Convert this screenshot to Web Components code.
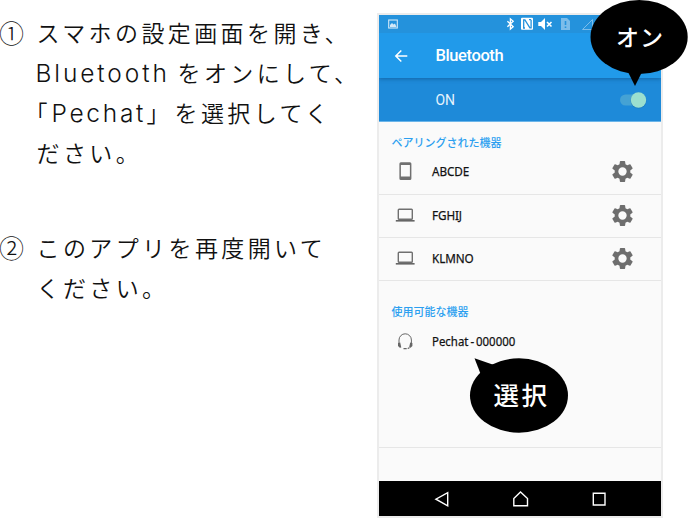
<!DOCTYPE html>
<html lang="ja"><head><meta charset="utf-8"><title>Bluetooth</title>
<style>body{margin:0;background:#fff;width:688px;height:518px;overflow:hidden}</style></head><body>
<pairing-guide></pairing-guide>
<script>
const define=(name,html)=>customElements.define(name,class extends HTMLElement{
 constructor(){super();const t=document.createElement('template');t.innerHTML=html;this.attachShadow({mode:'open'}).append(t.content.cloneNode(true));}
});
define('guide-step',`<style>
:host{display:grid;grid-template-columns:36.5px 1fr;font:350 23px/40px "Noto Sans CJK JP",sans-serif;color:#111;letter-spacing:3.4px;white-space:nowrap}
.n{font-size:25px;font-weight:300;letter-spacing:0;margin-left:-1px}</style>
<div class="n"><slot name="number"></slot></div><div><slot></slot></div>`);
define('text-line',`<style>:host{display:flex;height:40px}
::slotted(.latin){font-family:Inter,sans-serif;font-weight:300;font-size:24.5px;padding-top:1px}
::slotted(.bt){width:142px;margin-left:-1px;letter-spacing:2.9px}
::slotted(.pe){width:96px;letter-spacing:2.7px}
::slotted(.open){margin-left:-12px;width:27px}
::slotted(.close){width:28px;margin-left:-1px}</style><slot></slot>`);
define('status-bar',`<style>:host{display:block;height:18px;background:#2492dc}svg{display:block}</style>
<svg width="282" height="18" viewBox="379 15 282 18" fill="none" stroke="#fff">
<g opacity=".8"><rect x="388.7" y="20" width="8.6" height="8" stroke-width="1.1"/><path d="M390 27v-2l2-2 1.5 1.5 1.5-1 1.5 3.5z" fill="#fff" stroke="none"/></g>
<path d="M507.4 21.2l5.8 5.5-2.8 2.4V18.8l2.8 2.4-5.8 5.5" stroke-width="1.3"/>
<g stroke="none" fill="#fff"><rect x="521" y="17.8" width="12" height="12" rx="1"/><path d="M538.3 22h2.7l4-4v12l-4-4h-2.7z"/></g>
<path d="M523.7 28V19.8h1.2l5 8h1.2V19.8M523 28h2m4-8.4h2" stroke="#2492dc" stroke-width="1.3"/>
<path d="M547 22l4.5 4.5m0-4.5L547 26.5" stroke-width="1.6"/>
<g opacity=".4"><path d="M561 18h6l3 3v9h-9z" fill="#fff" stroke="none"/><path d="M565.5 21v4m0 1.5v1.5" stroke="#2492dc" stroke-width="1.6"/><path d="M582.5 29.5l10-10v10z"/></g>
</svg>`);
define('app-bar',`<style>:host{display:flex;height:45px;background:#219aea;align-items:center;color:#fff;font:500 16.5px/20px Roboto,sans-serif;position:relative;box-shadow:0 1px 4px #0b4d8499;clip-path:inset(0 0 -6px 0);padding-left:14px;box-sizing:border-box}
svg{width:16px;margin-right:26.5px}span{letter-spacing:-.4px;padding-top:1px}</style>
<svg viewBox="0 0 16 16" fill="none" stroke="#fff" stroke-width="1.5"><path d="M14.3 8H3M8.3 2.5L2.8 8l5.5 5.5"/></svg><span><slot></slot></span>`);
define('toggle-row',`<style>:host{display:flex;height:44px;box-sizing:border-box;background:#1e8ad9;border-bottom:1px solid #6bb5e9;color:#e5f3fd;font:400 14px/42px Roboto,sans-serif;padding:1px 13px 0 56.5px;justify-content:space-between;align-items:center}span{letter-spacing:-.2px}svg{margin-top:-1px}</style>
<span><slot></slot></span><svg width="30" height="20" viewBox="0 0 30 20"><rect x="2" y="4.5" width="24" height="11" rx="5.5" fill="#45a2d4"/><circle cx="20.5" cy="10.5" r="8" fill="#176ca9" opacity=".5"/><circle cx="20.5" cy="10" r="7.7" fill="#9bdfcf"/></svg>`);
define('section-title',`<style>:host{display:block;font:500 11px/16px "Noto Sans CJK JP",sans-serif;color:#2b9ff0;padding-left:12.5px}</style><slot></slot>`);
const gear='<svg class="gear" viewBox="0 0 24 24" fill="#6e6e6e"><path d="M19.43 12.98c.04-.32.07-.64.07-.98s-.03-.66-.07-.98l2.11-1.65a.5.5 0 0 0 .12-.64l-2-3.46a.5.5 0 0 0-.61-.22l-2.49 1a7.3 7.3 0 0 0-1.69-.98l-.38-2.65A.49.49 0 0 0 14 2h-4a.49.49 0 0 0-.49.42l-.38 2.65c-.61.25-1.17.59-1.69.98l-2.49-1a.5.5 0 0 0-.61.22l-2 3.46a.5.5 0 0 0 .12.64l2.11 1.65a8 8 0 0 0 0 1.96l-2.11 1.65a.5.5 0 0 0-.12.64l2 3.46c.12.22.39.3.61.22l2.49-1c.52.4 1.08.73 1.69.98l.38 2.65c.03.24.24.42.49.42h4c.25 0 .46-.18.49-.42l.38-2.65c.61-.25 1.17-.59 1.69-.98l2.49 1c.23.09.49 0 .61-.22l2-3.46a.5.5 0 0 0-.12-.64zM12 16a4 4 0 1 1 0-8 4 4 0 0 1 0 8z"/></svg>';
const icons={
phone:'<path d="M5.5 1.2h9q1.5 0 1.5 1.5v14.8q0 1.5-1.5 1.5h-9Q4 19 4 17.5V2.7q0-1.5 1.5-1.5zM5.5 4v11.5h9V4z" fill="#707070" fill-rule="evenodd" transform="translate(.4 0)"/>',
laptop:'<rect x="3.3" y="4.3" width="14" height="10" rx=".8" fill="none" stroke="#707070" stroke-width="1.4"/><path d="M.8 15h18.8v1.6H.8z" fill="#666"/>',
headset:'<path d="M4 13V9a6.2 6.2 0 0 1 12.4 0v4" fill="none" stroke="#666" stroke-width="1"/><path d="M3 12l2.2-.5 1.1 5-1.5.3L3 15zm14.4 0l-2.2-.5-1.1 5 1.5.3 1.8-1.8z" fill="#666"/><path d="M8.5 17.7h3.2m1-.2l1.6-.7" fill="none" stroke="#666" stroke-width="1.3"/>'};
customElements.define('device-row',class extends HTMLElement{connectedCallback(){
 this.attachShadow({mode:'open'}).innerHTML=`<style>
 :host{display:flex;align-items:center;box-sizing:border-box;height:43px;padding:0 26px 1.5px 16px;border-bottom:1.5px solid #e6e6e6;font:400 13px/18px "Noto Sans",sans-serif;color:#111;-webkit-text-stroke:.25px #111}
 .icon{width:20px;height:20px}.gear{width:25px;height:25px;margin-left:auto}.label{margin-left:17px;letter-spacing:var(--tracking,-.1px);word-spacing:var(--gap,0);white-space:pre;display:block;transform-origin:left;transform:scaleX(var(--squeeze,.9))}</style>
 <svg class="icon" viewBox="0 0 20 20">${icons[this.getAttribute('kind')]}</svg><span class="label"><slot></slot></span>${this.hasAttribute('settings')?gear:''}`;
}});
define('nav-bar',`<style>:host{display:block;height:35px;background:#000}svg{display:block}</style>
<svg width="282" height="35" viewBox="379 481 282 35" fill="none" stroke="#fff" stroke-width="1.4"><path d="M447.7 492.7v13.2l-11.8-6.7zM513.8 505.8v-7.3l6.7-6.5 7 6.5v7.3zM593.3 493.3h11.7v11.7h-11.7z"/></svg>`);
define('speech-bubble',`<style>:host{display:block;position:absolute;color:#fff;font:500 26px/30px "Noto Sans CJK JP",sans-serif}
svg{position:absolute;inset:0;overflow:visible}span{position:relative;display:block;text-align:center;white-space:nowrap}
:host([kind=on]){left:590px;top:0;width:98px;height:87px}:host([kind=on]) .pick{display:none}
:host([kind=on]) span{padding:20.5px 0 0 2px;font-size:23px;letter-spacing:1px}
:host([kind=pick]){left:470px;top:358px;width:98px;height:76px}:host([kind=pick]) .on{display:none}
:host([kind=pick]) span{padding:21px 0 0 5px;font-size:25.5px;letter-spacing:2.5px}</style>
<svg class="on" width="98" height="87"><ellipse cx="49.1" cy="37" rx="48.6" ry="37"/><path d="M37 70l8 16 8-16z"/></svg>
<svg class="pick" width="98" height="76"><ellipse cx="49" cy="37.5" rx="49" ry="37.2"/><path d="M4.5.3L24 7 11 17z"/></svg><span><slot></slot></span>`);
define('phone-screen',`<style>:host{display:flex;flex-direction:column;box-sizing:border-box;width:286px;height:505px;border:2px solid #ececec;background:#fafafa}
.paired{padding-top:12px}.available{padding-top:22px;height:167px;box-sizing:border-box;border-bottom:1px solid #e6e6e6}
.first{height:45px}.gap{flex:1}.pechat{height:45px;border:0;--tracking:0px;--squeeze:.88;--gap:-1.2px}</style>
<status-bar></status-bar><app-bar>Bluetooth</app-bar><toggle-row>ON</toggle-row>
<div class="paired"><section-title>ペアリングされた機器</section-title>
<device-row class="first" kind="phone" settings>ABCDE</device-row><device-row kind="laptop" settings>FGHIJ</device-row><device-row kind="laptop" settings>KLMNO</device-row></div>
<div class="available"><section-title>使用可能な機器</section-title><device-row class="pechat" kind="headset">Pechat - 000000</device-row></div><div class="gap"></div><nav-bar></nav-bar>`);
define('pairing-guide',`<style>:host{display:grid;grid-template-columns:377px 286px;width:688px;height:518px;position:relative;overflow:hidden}
.steps{padding-top:12px;display:flex;flex-direction:column;gap:55px}.phone{padding-top:13px}</style>
<div class="steps"><guide-step><span slot="number">①</span>
<text-line><span>スマホの設定画面を開き、</span></text-line>
<text-line><span class="latin bt">Bluetooth</span><span>をオンにして、</span></text-line>
<text-line><span class="open">「</span><span class="latin pe">Pechat</span><span class="close">」</span><span>を選択してく</span></text-line>
<text-line><span>ださい。</span></text-line></guide-step>
<guide-step><span slot="number">②</span><text-line><span>このアプリを再度開いて</span></text-line><text-line><span>ください。</span></text-line></guide-step></div>
<div class="phone"><phone-screen></phone-screen></div>
<speech-bubble kind="on">オン</speech-bubble><speech-bubble kind="pick">選択</speech-bubble>`);
</script></body></html>
